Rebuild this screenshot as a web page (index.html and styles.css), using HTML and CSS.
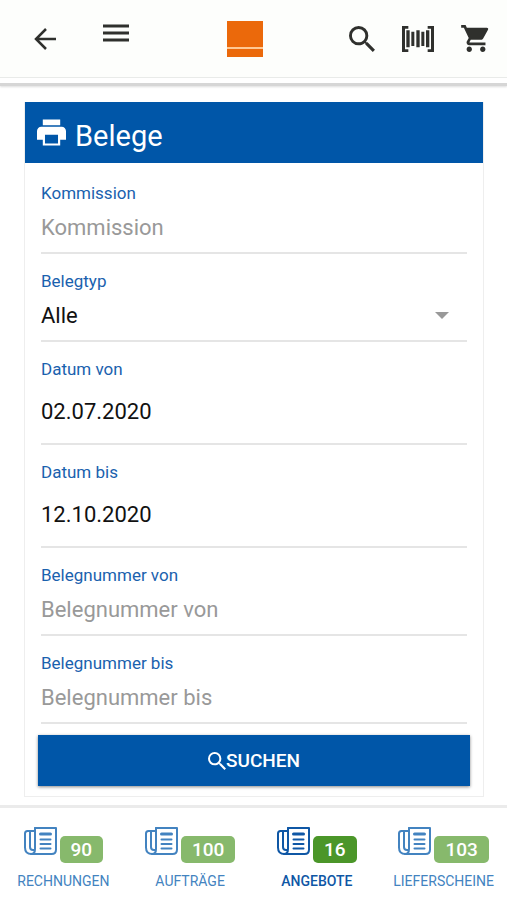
FILE: index.html
```html
<!DOCTYPE html>
<html lang="de">
<head>
<meta charset="utf-8">
<meta name="viewport" content="width=device-width, initial-scale=1">
<title>Belege</title>
<link rel="stylesheet" href="styles.css">
</head>
<body>
<svg class="sprite" aria-hidden="true">
  <symbol id="news" viewBox="0 0 33 28">
    <g fill="none" stroke="currentColor" stroke-width="2" stroke-linejoin="round" stroke-linecap="round">
      <path d="M11 1h21v21.500q0 4.500-4.500 4.500H7.500Q1 27 1 20.500V6.500Q1 4 3.500 4H11"/>
      <path d="M11 1v21q0 5-4 5M6 4.500V20q0 3 3 3h1.500"/>
      <path d="M16.500 7h10" stroke-width="3"/>
      <path d="M16.500 12.500h10M16.500 17h10M16.500 21.500h10"/>
    </g>
  </symbol>
  <symbol id="search" viewBox="3 3 17.500 17.500">
    <path fill="currentColor" d="M15.500 14h-.79l-.28-.27A6.471 6.471 0 0 0 16 9.500 6.500 6.500 0 1 0 9.500 16c1.610 0 3.090-.59 4.230-1.570l.27.28v.79l5 4.990L20.490 19l-4.990-5zm-6 0C7.010 14 5 11.990 5 9.500S7.010 5 9.500 5 14 7.010 14 9.500 11.990 14 9.500 14z"/>
  </symbol>
</svg>

<header class="header">
  <div class="bar">
    <div class="bar-left">
      <button class="icon-button" type="button" aria-label="Zurück">
        <svg class="icon-back" viewBox="0 0 22 22"><path d="M12 1 2 11l10 10M2 11h20" fill="none" stroke="currentColor" stroke-width="2.500"/></svg>
      </button>
      <button class="icon-button menu-button" type="button" aria-label="Menü">
        <svg class="icon-menu" viewBox="0 0 26 18"><path d="M0 2h26M0 9h26M0 16h26" stroke="currentColor" stroke-width="3"/></svg>
      </button>
    </div>
    <a class="logo" href="#" aria-label="Startseite">
      <svg viewBox="0 0 36 36"><path fill="#ffc893" d="M0 0h36v36H0z"/><path fill="#eb690b" d="M0 0h36v26H0zM0 28h36v8H0z"/></svg>
    </a>
    <div class="bar-right">
      <button class="icon-button" type="button" aria-label="Suche">
        <svg class="icon-search"><use href="#search"/></svg>
      </button>
      <button class="icon-button" type="button" aria-label="Barcode scannen">
        <svg class="icon-barcode" viewBox="0 0 96 78"><path fill="currentColor" d="M0 0h19v8H9v62h10v8H0zM96 0H77v8h10v62H77v8h19zM13 13h10v51H13zM28 17h9v43h-9zM43 13h10v51H43zM58 17h9v43h-9zM72 13h10v51H72z"/></svg>
      </button>
      <button class="icon-button" type="button" aria-label="Warenkorb">
        <svg class="icon-cart" viewBox="1 2 20.500 20"><path fill="currentColor" d="M7 18c-1.100 0-1.990.9-1.990 2S5.900 22 7 22s2-.9 2-2-.9-2-2-2zM1 2v2h2l3.600 7.590-1.350 2.450c-.16.28-.25.61-.25.96 0 1.100.9 2 2 2h12v-2H7.420c-.14 0-.25-.11-.25-.25l.03-.12.9-1.630h7.450c.75 0 1.410-.41 1.750-1.030l3.580-6.490A1.003 1.003 0 0 0 20 4H5.210l-.94-2H1zm16 16c-1.100 0-1.990.9-1.990 2s.89 2 1.990 2 2-.9 2-2-.9-2-2-2z"/></svg>
      </button>
    </div>
  </div>
</header>

<main class="main">
  <section class="card">
    <div class="card-title">
      <svg class="icon-print" viewBox="2 3 20 18"><path fill="currentColor" d="M19 8H5c-1.660 0-3 1.340-3 3v6h4v4h12v-4h4v-6c0-1.660-1.340-3-3-3zm-2.500 11.500h-9v-6h9v6zM18 3H6v4h12V3z"/></svg>
      <h1>Belege</h1>
    </div>
    <form class="form">
      <div class="field">
        <label for="kommission">Kommission</label>
        <input id="kommission" type="text" placeholder="Kommission">
      </div>
      <div class="field select-field">
        <label for="belegtyp">Belegtyp</label>
        <select id="belegtyp"><option>Alle</option></select>
      </div>
      <div class="field date-field">
        <label for="datum-von">Datum von</label>
        <input id="datum-von" type="text" value="02.07.2020">
      </div>
      <div class="field date-field">
        <label for="datum-bis">Datum bis</label>
        <input id="datum-bis" type="text" value="12.10.2020">
      </div>
      <div class="field">
        <label for="nummer-von">Belegnummer von</label>
        <input id="nummer-von" type="text" placeholder="Belegnummer von">
      </div>
      <div class="field">
        <label for="nummer-bis">Belegnummer bis</label>
        <input id="nummer-bis" type="text" placeholder="Belegnummer bis">
      </div>
      <button class="submit" type="button"><svg><use href="#search"/></svg>SUCHEN</button>
    </form>
  </section>
</main>

<nav class="tabs">
  <a class="tab" href="#"><span class="tab-top"><svg><use href="#news"/></svg><span class="badge">90</span></span><span class="tab-label">RECHNUNGEN</span></a>
  <a class="tab" href="#"><span class="tab-top"><svg><use href="#news"/></svg><span class="badge">100</span></span><span class="tab-label">AUFTRÄGE</span></a>
  <a class="tab active" href="#" aria-current="page"><span class="tab-top"><svg><use href="#news"/></svg><span class="badge">16</span></span><span class="tab-label">ANGEBOTE</span></a>
  <a class="tab" href="#"><span class="tab-top"><svg><use href="#news"/></svg><span class="badge">103</span></span><span class="tab-label">LIEFERSCHEINE</span></a>
</nav>
</body>
</html>
```

FILE: styles.css
```css
* {
  box-sizing: border-box;
}

body {
  margin: 0;
  min-height: 100vh;
  display: flex;
  flex-direction: column;
  background: #fff;
  color: #111;
  font-family: Roboto, "Liberation Sans", sans-serif;
}

svg {
  display: block;
}

.sprite {
  position: absolute;
  width: 0;
  height: 0;
}

/* Header */
.header {
  padding-bottom: 5px;
  border-bottom: 3px solid #d6d6d6;
  box-shadow: 0 1px 2px #ddd;
}

.bar {
  display: grid;
  grid-template-columns: 1fr auto 1fr;
  align-items: center;
  height: 78px;
  padding-right: 18px;
  background: #fdfefc;
  border-bottom: 1px solid #e9ebe9;
}

.bar-left {
  display: flex;
  align-items: center;
  gap: 47px;
  padding-left: 34px;
}

.bar-right {
  display: flex;
  align-items: center;
  justify-content: flex-end;
  gap: 27px;
}

.icon-button {
  padding: 0;
  border: 0;
  background: none;
  color: #2f302d;
}

.menu-button {
  padding-bottom: 11px;
}

.icon-back {
  width: 22px;
  height: 22px;
}

.icon-menu {
  width: 26px;
  height: 18px;
}

.icon-search {
  width: 26px;
  height: 26px;
}

.icon-barcode {
  width: 32px;
  height: 26px;
}

.icon-cart {
  width: 28px;
  height: 27px;
}

.logo svg {
  width: 36px;
  height: 36px;
}

/* Search card */
.main {
  flex: 1;
  padding: 16px 23px 7px 24px;
}

.card {
  border: 1px solid #eee;
  border-top: 0;
}

.card-title {
  display: flex;
  align-items: center;
  gap: 9px;
  height: 61px;
  padding-left: 12px;
  background: #0056a8;
  color: #fff;
}

.card-title h1 {
  margin: 0;
  padding-top: 6px;
  font-size: 29px;
  font-weight: 400;
  line-height: 34px;
}

.icon-print {
  width: 29px;
  height: 27px;
}

.form {
  padding: 3px 13px 10px;
}

.field {
  margin: 0 3px;
  padding-top: 17px;
  border-bottom: 2px solid #e5e5e5;
}

.field label {
  display: block;
  color: #1a61ae;
  font-size: 17px;
  line-height: 20px;
}

.field input,
.field select {
  display: block;
  width: 100%;
  height: 49px;
  padding: 0;
  border: 0;
  outline: 0;
  background: none;
  color: #111;
  font-family: inherit;
  font-size: 22px;
}

.field select {
  appearance: none;
}

.field input::placeholder {
  color: #999;
}

.date-field input {
  height: 64px;
}

.select-field {
  position: relative;
}

.select-field::after {
  content: "";
  position: absolute;
  right: 18px;
  bottom: 21px;
  border: 7px solid transparent;
  border-top-color: #999;
  border-bottom: 0;
  pointer-events: none;
}

.submit {
  display: flex;
  align-items: center;
  justify-content: center;
  width: 100%;
  height: 51px;
  margin-top: 11px;
  padding: 0;
  border: 0;
  background: #0056a8;
  box-shadow: 0 1px 3px #888;
  color: #fff;
  font-family: inherit;
  font-size: 19px;
  font-weight: 500;
}

.submit svg {
  width: 18px;
  height: 18px;
}

/* Bottom tabs */
.tabs {
  display: grid;
  grid-template-columns: repeat(4, 1fr);
  border-top: 3px solid #ebebeb;
}

.tab {
  display: flex;
  flex-direction: column;
  align-items: center;
  gap: 10px;
  padding: 19px 0 11px;
  color: #4383c0;
  text-decoration: none;
}

.tab-top {
  display: flex;
  gap: 3px;
}

.tab-top svg {
  width: 33px;
  height: 28px;
}

.badge {
  margin-top: 9px;
  padding: 0 11px;
  border-radius: 5px;
  background: #87b96c;
  color: #fff;
  font-size: 19px;
  font-weight: 500;
  line-height: 27px;
}

.tab-label {
  font-size: 14px;
  line-height: 16px;
}

.tab.active {
  color: #0f57a5;
}

.active .badge {
  background: #4b9629;
}

.active .tab-label {
  font-weight: 500;
}
```
